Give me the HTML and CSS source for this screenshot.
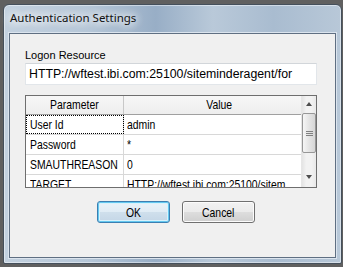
FILE: index.html
```html
<!DOCTYPE html>
<html lang="en">
<head>
  <meta charset="UTF-8" />
  <title>Authentication Settings</title>
  <meta name="viewport" content="width=device-width, initial-scale=1.0" />
  <link rel="stylesheet" href="styles.css">
</head>
<body>
  <div class="window">
    <div class="titlebar">Authentication Settings</div>
    <div class="client">
      <label class="field-label">Logon Resource</label>
      <div class="textbox">HTTP://wftest.ibi.com:25100/siteminderagent/for</div>

      <div class="grid">
        <div class="grid-body">
          <div class="row header">
            <div class="cell name"><span class="txt">Parameter</span></div>
            <div class="cell value"><span class="txt">Value</span></div>
          </div>
          <div class="row">
            <div class="cell name focus"><span class="txt">User Id</span></div>
            <div class="cell value"><span class="txt">admin</span></div>
          </div>
          <div class="row">
            <div class="cell name"><span class="txt">Password</span></div>
            <div class="cell value"><span class="txt">*</span></div>
          </div>
          <div class="row">
            <div class="cell name"><span class="txt">SMAUTHREASON</span></div>
            <div class="cell value"><span class="txt">0</span></div>
          </div>
          <div class="row">
            <div class="cell name"><span class="txt">TARGET</span></div>
            <div class="cell value"><span class="txt">HTTP://wftest.ibi.com:25100/sitem</span></div>
          </div>
        </div>
        <div class="scrollbar">
          <div class="arrow up"></div>
          <div class="thumb"><span class="grip"></span></div>
          <div class="track"></div>
          <div class="arrow down"></div>
        </div>
      </div>

      <div class="buttons">
        <button class="btn default"><span class="txt">OK</span></button>
        <button class="btn"><span class="txt">Cancel</span></button>
      </div>
    </div>
  </div>
</body>
</html>
```

FILE: styles.css
```css
* { box-sizing: border-box; }
body { margin: 0; background: #606060; font-family: "Liberation Sans", Arial, sans-serif; }

.window { width: 339px; height: 260px; margin: 4px 0 0 3px; border: 1px solid #45505c; border-radius: 6px 6px 2px 2px; padding: 0 5px 5px 5px;
  background: linear-gradient(90deg, #c3d1df 0%, #b6c7d8 25%, #98aec6 45%, #b9c9d9 62%, #a9bcd0 80%, #b8c8d8 100%);
  box-shadow: inset 0 0 0 1px rgba(255,255,255,0.45); }
.titlebar { height: 28px; padding: 5px 0 0 1px; font-family: "Noto Sans", sans-serif; font-size: 11.5px; line-height: 16px; color: #111;
  text-shadow: 0 0 8px #fff, 0 0 10px #fff, 0 0 12px #fff; }

.client { height: 225px; background: #f0f0f0; border: 1px solid #5f6f82; box-shadow: 0 0 0 1px #dbe4ee; padding: 15px 0 0 15px; display: flex; flex-direction: column; }
.field-label { font-size: 11px; line-height: 13px; color: #000; }
.textbox { margin-top: 1px; width: 292px; height: 22px; background: #fff; border: 1px solid #e2e6ea; border-top-color: #d2d6da; padding: 0 0 0 3px; font-size: 12.3px; line-height: 20px; white-space: nowrap; overflow: hidden; }

/* narrow grid/button font: Arial at 13px squeezed like Arial Narrow */
.txt { display: inline-block; transform: scaleX(0.8); transform-origin: left center; }

.grid { margin-top: 10px; width: 292px; height: 93px; border: 1px solid #6e6e6e; background: #fff; display: flex; overflow: hidden; }
.grid-body { width: 275px; overflow: hidden; }
.row { display: flex; height: 20px; border-bottom: 1px solid #d8d8d8; font-size: 13px; line-height: 19px; white-space: nowrap; }
.cell { overflow: hidden; }
.cell.name { width: 98px; border-right: 1px solid #d8d8d8; padding-left: 4px; }
.cell.value { flex: 1; padding-left: 3px; }
.cell.focus { outline: 1px dotted #000; outline-offset: -1px; }
.row.header { height: 19px; line-height: 18px; background: linear-gradient(#f7f7f7, #eeeeee); border-bottom-color: #a0a0a0; }
.row.header .cell { text-align: center; padding-left: 0; }
.row.header .cell.value { padding-left: 14px; }
.row.header .cell.name { border-right-color: #c8c8c8; }
.row.header .txt { transform-origin: center; }

.scrollbar { width: 15px; display: flex; flex-direction: column; background: linear-gradient(90deg, #e4e4e4, #f2f2f2 30%, #f2f2f2 70%, #e8e8e8); border-left: 1px solid #e6e6e6; }
.arrow { height: 17px; position: relative; }
.arrow::after { content: ""; position: absolute; left: 4px; border-left: 3px solid transparent; border-right: 3px solid transparent; }
.arrow.up::after { top: 6px; border-bottom: 4px solid #4d4d4d; }
.arrow.down::after { top: 5px; border-top: 4px solid #4d4d4d; }
.thumb { height: 40px; border: 1px solid #979797; border-radius: 2px; background: linear-gradient(90deg, #f6f6f6, #e4e4e4 50%, #d6d6d6); display: flex; align-items: center; justify-content: center; }
.grip { width: 7px; height: 5px; border-top: 1px solid #808080; border-bottom: 1px solid #808080; position: relative; }
.grip::after { content: ""; position: absolute; left: 0; right: 0; top: 1px; border-top: 1px solid #808080; }
.track { flex: 1; }

.buttons { margin-top: 13px; padding-left: 72px; display: flex; gap: 12px; }
.btn { width: 73px; height: 22px; font-family: "Liberation Sans", Arial, sans-serif; font-size: 13px; color: #000; border: 1px solid #707070; border-radius: 3px; padding: 0;
  background: linear-gradient(#f2f2f2 0%, #ebebeb 48%, #dddddd 52%, #cfcfcf 100%); box-shadow: inset 0 0 0 1px #fcfcfc; }
.btn .txt { transform-origin: center; }
.btn.default { border-color: #3c7fb1; background: linear-gradient(#eaf2f8 0%, #e0ecf5 48%, #cfdfec 52%, #c4d6e6 100%); box-shadow: inset 0 0 0 1px #64c8f0, inset 0 0 0 2px #d8f2fc; }
```
